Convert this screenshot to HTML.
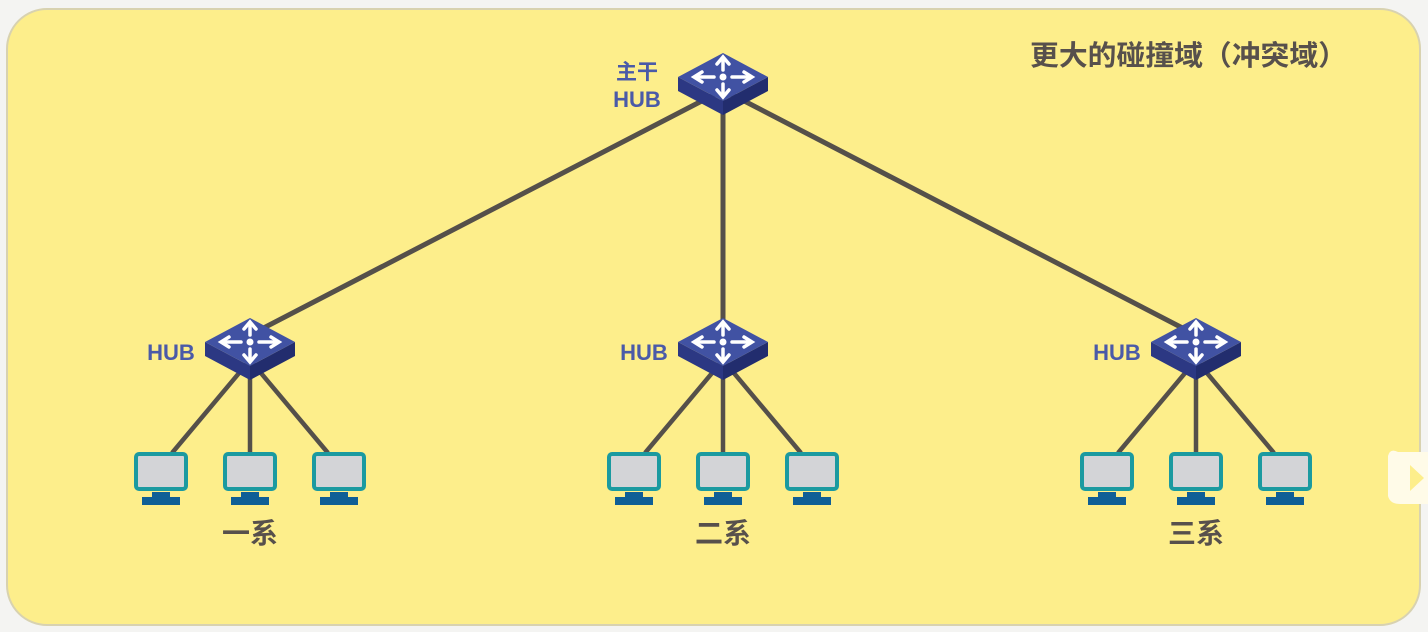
<!DOCTYPE html>
<html><head><meta charset="utf-8"><style>
html,body{margin:0;padding:0;background:#f4f4f2;}
svg{display:block}
text{font-family:"Liberation Sans","Noto Sans CJK SC",sans-serif;font-weight:bold}
</style></head><body>
<svg width="1428" height="632" viewBox="0 0 1428 632" xmlns="http://www.w3.org/2000/svg">
<defs>
<g id="hub">
<path d="M-45 0 L0 24 L0 38 L-45 14 Z" fill="#2c3883"/>
<path d="M45 0 L0 24 L0 38 L45 14 Z" fill="#222d6e"/>
<path d="M0 -24 L45 0 L0 24 L-45 0 Z" fill="#4152a3"/>
<g fill="#fff" stroke="#fff" stroke-width="3.5" stroke-linecap="round">
<circle cx="0" cy="0" r="3.5" stroke="none"/>
<line x1="0" y1="-7" x2="0" y2="-17"/>
<path d="M-6 -13 L0 -20 L6 -13" fill="none"/>
<line x1="0" y1="7" x2="0" y2="17"/>
<path d="M-6 13 L0 20 L6 13" fill="none"/>
<line x1="-9" y1="0" x2="-27" y2="0"/>
<path d="M-21 -5 L-29 0 L-21 5" fill="none"/>
<line x1="9" y1="0" x2="27" y2="0"/>
<path d="M21 -5 L29 0 L21 5" fill="none"/>
</g>
</g>
<g id="pc">
<rect x="-25" y="2" width="50" height="35" rx="3" fill="#d3d4d7" stroke="#1b9aa0" stroke-width="4"/>
<rect x="-9" y="40" width="18" height="6" fill="#0f5f96"/>
<rect x="-19" y="45" width="38" height="8" fill="#0f5f96"/>
</g>
</defs>
<rect x="7" y="9" width="1413" height="616" rx="40" fill="#fdee8b" stroke="#d8d2b0" stroke-width="2"/>
<g stroke="#55504a" stroke-width="5" stroke-linecap="round">
<line x1="723" y1="90" x2="250" y2="335"/>
<line x1="723" y1="90" x2="723" y2="335"/>
<line x1="723" y1="90" x2="1196" y2="335"/>
</g>
<g stroke="#55504a" stroke-width="4.5">
<line x1="250" y1="360" x2="172" y2="453"/><line x1="250" y1="360" x2="250" y2="453"/><line x1="250" y1="360" x2="328" y2="453"/>
<line x1="723" y1="360" x2="645" y2="453"/><line x1="723" y1="360" x2="723" y2="453"/><line x1="723" y1="360" x2="801" y2="453"/>
<line x1="1196" y1="360" x2="1118" y2="453"/><line x1="1196" y1="360" x2="1196" y2="453"/><line x1="1196" y1="360" x2="1274" y2="453"/>
</g>
<use href="#hub" x="723" y="77"/>
<use href="#hub" x="250" y="342"/>
<use href="#hub" x="723" y="342"/>
<use href="#hub" x="1196" y="342"/>
<use href="#pc" x="161" y="452"/><use href="#pc" x="250" y="452"/><use href="#pc" x="339" y="452"/>
<use href="#pc" x="634" y="452"/><use href="#pc" x="723" y="452"/><use href="#pc" x="812" y="452"/>
<use href="#pc" x="1107" y="452"/><use href="#pc" x="1196" y="452"/><use href="#pc" x="1285" y="452"/>
<g fill="#4a5aa8" font-size="22">
<text x="637" y="79" text-anchor="middle" font-size="21">主干</text>
<text x="637" y="107" text-anchor="middle">HUB</text>
<text x="171" y="360" text-anchor="middle">HUB</text>
<text x="644" y="360" text-anchor="middle">HUB</text>
<text x="1117" y="360" text-anchor="middle">HUB</text>
</g>
<g fill="#57504c" font-size="28">
<text x="250" y="543" text-anchor="middle">一系</text>
<text x="723" y="543" text-anchor="middle">二系</text>
<text x="1196" y="543" text-anchor="middle">三系</text>
<text x="1030" y="65" font-size="28" textLength="317" lengthAdjust="spacingAndGlyphs">更大的碰撞域（冲突域）</text>
</g>
<path d="M1398 452 Q1390 448 1388 456 L1388 496 Q1390 504 1400 504 L1428 504 L1428 452 Z" fill="#fffbe8"/>
<path d="M1410 465 L1424 478 L1410 491 Z" fill="#fdee8b"/>
</svg>
</body></html>
